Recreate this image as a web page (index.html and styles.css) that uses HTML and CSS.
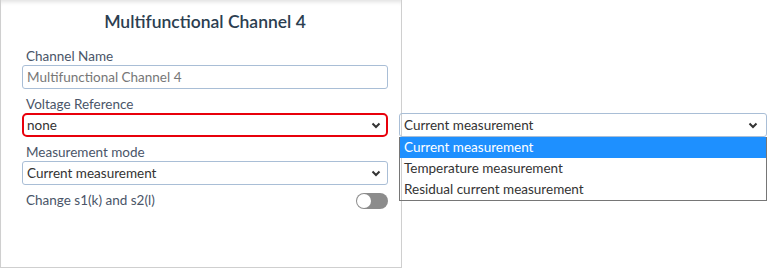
FILE: index.html
```html
<!DOCTYPE html>
<html lang="en">

<head>
    <meta charset="UTF-8">
    <meta name="viewport" content="width=device-width, initial-scale=1.0">
    <title>Multifunctional Channel 4</title>
    <link rel="stylesheet" href="styles.css">
</head>

<body>
    <div class="page">
        <div class="card">
            <h2 class="card-title">Multifunctional Channel 4</h2>

            <div class="field">
                <label class="field-label">Channel Name</label>
                <div class="input">Multifunctional Channel 4</div>
            </div>

            <div class="field">
                <label class="field-label">Voltage Reference</label>
                <div class="select select-error">
                    <span>none</span>
                    <svg class="chevron" width="10" height="7" viewBox="0 0 10 7">
                        <path d="M1.5 1.5l3.5 3.5 3.5-3.5" fill="none" stroke="#333" stroke-width="2" />
                    </svg>
                </div>
            </div>

            <div class="field">
                <label class="field-label">Measurement mode</label>
                <div class="select">
                    <span>Current measurement</span>
                    <svg class="chevron" width="10" height="7" viewBox="0 0 10 7">
                        <path d="M1.5 1.5l3.5 3.5 3.5-3.5" fill="none" stroke="#333" stroke-width="2" />
                    </svg>
                </div>
            </div>

            <div class="switch-row">
                <span class="field-label">Change s1(k) and s2(l)</span>
                <span class="switch"><span class="knob"></span></span>
            </div>
        </div>

        <div class="side">
            <div class="select select-open">
                <span>Current measurement</span>
                <svg class="chevron" width="10" height="7" viewBox="0 0 10 7">
                    <path d="M1.5 1.5l3.5 3.5 3.5-3.5" fill="none" stroke="#333" stroke-width="2" />
                </svg>
            </div>
            <ul class="options">
                <li class="option active">Current measurement</li>
                <li class="option">Temperature measurement</li>
                <li class="option">Residual current measurement</li>
            </ul>
        </div>
    </div>
</body>

</html>
```

FILE: styles.css
```css
* {
    box-sizing: border-box;
}

body {
    margin: 0;
    background: #fff;
    font-family: "Source Sans Pro", Lato, "Noto Sans", sans-serif;
    font-size: 13.5px;
    color: #333;
}

.page {
    display: flex;
    align-items: flex-start;
}

/* 左侧卡片 */
.card {
    flex: none;
    width: 402px;
    height: 268px;
    padding: 0 13px 0 21px;
    border: 1px solid #cfcfcf;
    border-top: none;
    box-shadow: inset 0 5px 4px -3px rgba(0, 0, 0, 0.12);
}

.card-title {
    margin: 0;
    height: 41px;
    line-height: 44px;
    text-align: center;
    font-size: 17.5px;
    font-weight: 600;
    color: #2c3e50;
}

.field-label {
    display: block;
    padding-left: 4px;
    height: 24px;
    line-height: 30px;
    color: #4a5568;
}

.input,
.select {
    height: 24px;
    border: 1px solid #a9bed6;
    border-radius: 3px;
    padding: 0 6px 0 4px;
    line-height: 22px;
    white-space: nowrap;
}

.input {
    color: #777;
}

.select {
    display: flex;
    align-items: center;
    justify-content: space-between;
    color: #333;
}

.select-error {
    border: 2px solid #e8000b;
    border-radius: 5px;
    padding-left: 3px;
    padding-right: 5px;
}

.chevron {
    flex: none;
}

.switch-row {
    display: flex;
    align-items: center;
    justify-content: space-between;
    margin-top: 6px;
}

.switch-row .field-label {
    line-height: 18px;
    height: 20px;
}

.switch {
    position: relative;
    width: 32px;
    height: 16px;
    border-radius: 8px;
    background: #8c8c8c;
}

.knob {
    position: absolute;
    top: 1px;
    left: 1px;
    width: 14px;
    height: 14px;
    border-radius: 50%;
    background: #fff;
}

/* 右侧展开的下拉框，压在卡片边框上 */
.side {
    flex: none;
    width: 368px;
    margin-top: 113px;
    margin-left: -3px;
}

.side .select {
    padding-left: 4px;
    padding-right: 8px;
}

.options {
    list-style: none;
    margin: 0;
    padding: 0;
    border: 1px solid #767676;
    border-top: none;
}

.option {
    height: 21px;
    line-height: 20px;
    padding-left: 4px;
    color: #333;
}

.option.active {
    background: #1e90ff;
    color: #fff;
}
```
